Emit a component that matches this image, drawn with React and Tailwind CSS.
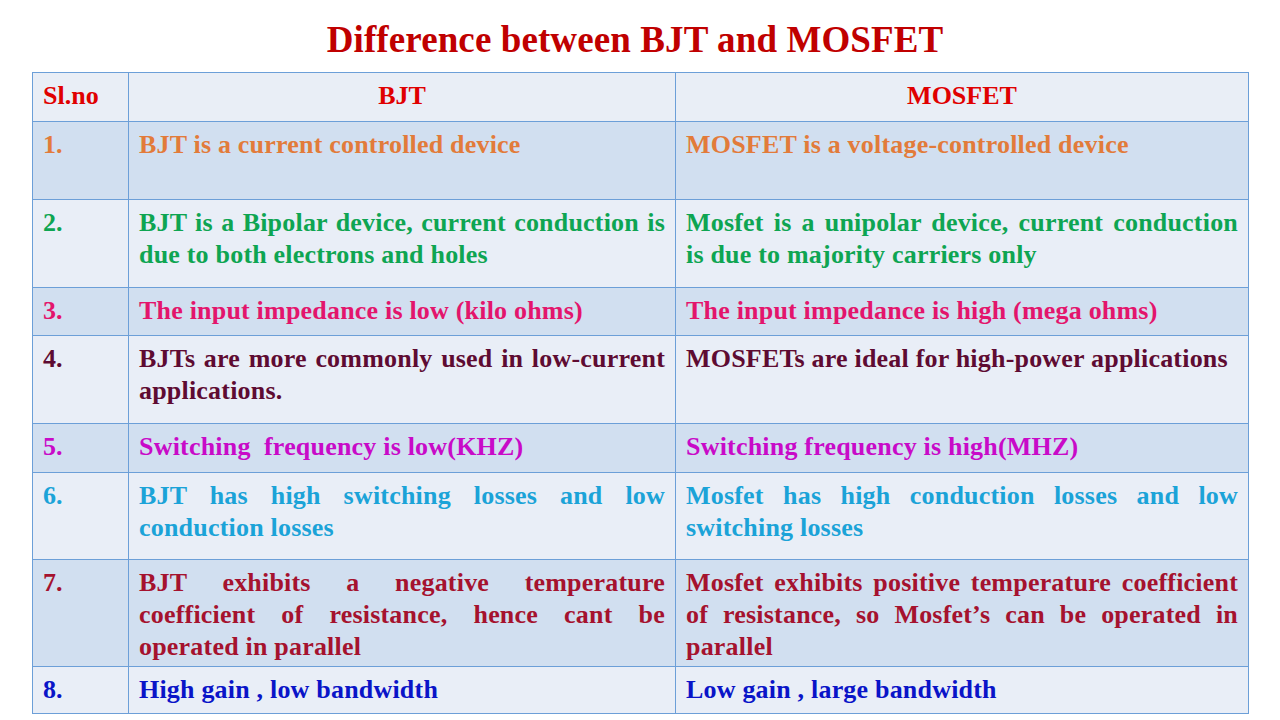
const rows = [
  {
    n: "1.",
    a: "BJT is a current controlled device",
    b: "MOSFET is a voltage-controlled device",
    color: "text-[#e27b3a]",
    h: "h-[78px]",
    dark: true,
  },
  {
    n: "2.",
    a: "BJT is a Bipolar device, current conduction is due to both electrons and holes",
    b: "Mosfet is a unipolar device, current conduction is due to majority carriers only",
    color: "text-[#0ea552]",
    h: "h-[88px]",
  },
  {
    n: "3.",
    a: "The input impedance is low (kilo ohms)",
    b: "The input impedance is high (mega ohms)",
    color: "text-[#e3156c]",
    h: "h-[48px]",
    dark: true,
  },
  {
    n: "4.",
    a: "BJTs are more commonly used in low-current applications.",
    b: "MOSFETs are ideal for high-power applications",
    color: "text-[#5e0b32]",
    h: "h-[88px]",
  },
  {
    n: "5.",
    a: "Switching  frequency is low(KHZ)",
    b: "Switching frequency is high(MHZ)",
    color: "text-[#c80ac8]",
    h: "h-[49px]",
    dark: true,
  },
  {
    n: "6.",
    a: "BJT has high switching losses and low conduction losses",
    b: "Mosfet has high conduction losses and low switching losses",
    color: "text-[#1ba3d8]",
    h: "h-[87px]",
  },
  {
    n: "7.",
    a: "BJT exhibits a negative temperature coefficient of resistance, hence cant be operated in parallel",
    b: "Mosfet exhibits positive temperature coefficient of resistance, so Mosfet\u2019s can be operated in parallel",
    color: "text-[#a5122e]",
    h: "h-[107px]",
    dark: true,
  },
  {
    n: "8.",
    a: "High gain , low bandwidth",
    b: "Low gain , large bandwidth",
    color: "text-[#0a14c8]",
    h: "h-[47px]",
  },
]

function Cell({ children, className = "" }) {
  return (
    <td className={"border border-[#6c9fd8] align-top px-[10px] pt-[7px] leading-[32px] " + className}>
      {children}
    </td>
  )
}

export default function App() {
  return (
    <div className="w-[1280px] h-[720px] bg-white overflow-hidden font-['Liberation_Serif',serif] font-bold">
      <h1 className="text-center text-[37px] leading-[40px] pt-[20px] text-[#c00000] pr-[10px] tracking-[0.1px]">
        Difference between BJT and MOSFET
      </h1>
      <table className="ml-[32px] mt-[12px] w-[1216px] border-collapse table-fixed text-[26px]">
        <colgroup>
          <col className="w-[96px]" />
          <col className="w-[547px]" />
          <col className="w-[573px]" />
        </colgroup>
        <tbody>
          <tr className="h-[49px] bg-[#e9eef6] text-[#e00000]">
            <Cell className="pt-[6px]">Sl.no</Cell>
            <Cell className="pt-[6px] text-center">BJT</Cell>
            <Cell className="pt-[6px] text-center">MOSFET</Cell>
          </tr>
          {rows.map((r) => (
            <tr key={r.n} className={r.h + " " + r.color + " " + (r.dark ? "bg-[#d1dff0]" : "bg-[#e9eef7]")}>
              <Cell>{r.n}</Cell>
              <Cell className="text-justify whitespace-pre-wrap tracking-[0.2px]">{r.a}</Cell>
              <Cell className="text-justify tracking-[0.2px]">{r.b}</Cell>
            </tr>
          ))}
        </tbody>
      </table>
    </div>
  )
}
